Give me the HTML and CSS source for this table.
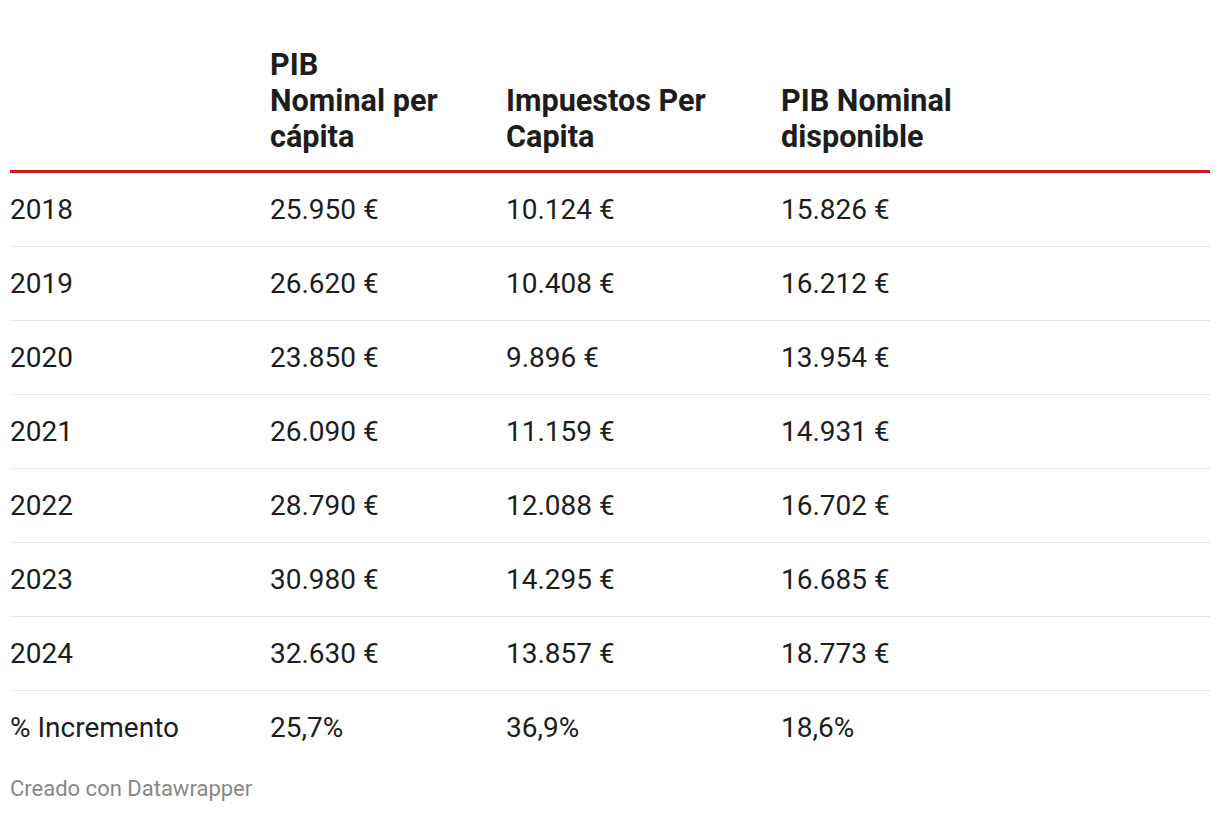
FILE: index.html
```html
<!DOCTYPE html>
<html lang="es">
<head>
<meta charset="utf-8">
<link rel="stylesheet" href="styles.css">
</head>
<body>
<div class="wrap">
<table class="tbl">
  <colgroup>
    <col class="c1"><col class="c2"><col class="c3"><col class="c4">
  </colgroup>
  <thead>
    <tr>
      <th></th>
      <th><span class="hd">PIB<br>Nominal per cápita</span></th>
      <th><span class="hd">Impuestos Per Capita</span></th>
      <th><span class="hd">PIB Nominal disponible</span></th>
    </tr>
  </thead>
  <tbody>
    <tr><td>2018</td><td>25.950 €</td><td>10.124 €</td><td>15.826 €</td></tr>
    <tr><td>2019</td><td>26.620 €</td><td>10.408 €</td><td>16.212 €</td></tr>
    <tr><td>2020</td><td>23.850 €</td><td>9.896 €</td><td>13.954 €</td></tr>
    <tr><td>2021</td><td>26.090 €</td><td>11.159 €</td><td>14.931 €</td></tr>
    <tr><td>2022</td><td>28.790 €</td><td>12.088 €</td><td>16.702 €</td></tr>
    <tr><td>2023</td><td>30.980 €</td><td>14.295 €</td><td>16.685 €</td></tr>
    <tr><td>2024</td><td>32.630 €</td><td>13.857 €</td><td>18.773 €</td></tr>
    <tr><td>% Incremento</td><td>25,7%</td><td>36,9%</td><td>18,6%</td></tr>
  </tbody>
</table>
<div class="footer">Creado con Datawrapper</div>
</div>
</body>
</html>
```
FILE: styles.css
```css
html, body {
  margin: 0;
  padding: 0;
  background: #ffffff;
}
body {
  font-family: Roboto, "Liberation Sans", sans-serif;
  color: #1d1d1d;
}
.wrap {
  padding: 47px 10px 0 10px;
}
.tbl {
  width: 1200px;
  border-collapse: collapse;
  table-layout: fixed;
}
.c1 { width: 260px; }
.c2 { width: 236px; }
.c3 { width: 275px; }
.c4 { width: 429px; }
.tbl th {
  font-weight: 700;
  font-size: 30.6px;
  line-height: 36px;
  text-align: left;
  vertical-align: bottom;
  padding: 0 10px 15px 0;
  border-bottom: 3px solid #c71e1d;
}
.hd {
  display: block;
  max-width: 240px;
}
.tbl td {
  font-size: 28px;
  line-height: 30px;
  height: 73px;
  padding: 0;
  vertical-align: middle;
  border-bottom: 1px solid #e6e6e6;
}
.tbl tbody tr:last-child td {
  border-bottom: none;
}
.footer {
  margin-top: 10px;
  font-size: 22px;
  line-height: 30px;
  color: #888888;
}
```
